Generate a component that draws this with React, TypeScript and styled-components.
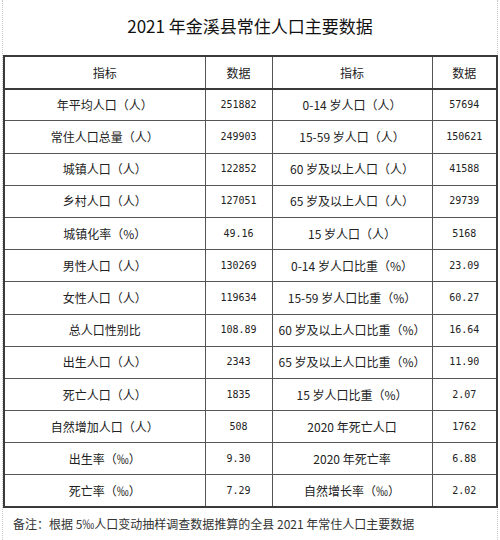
import React from 'react';
import styled, { createGlobalStyle } from 'styled-components';

const GlobalStyle = createGlobalStyle`
  html, body {
    margin: 0;
    padding: 0;
    background: #ffffff;
  }
`;

const Page = styled.div`
  box-sizing: border-box;
  width: 496px;
  height: 540px;
  margin-left: 2px;
  border-left: 1px dotted #c8c8c8;
  border-right: 1px dotted #c8c8c8;
  font-family: "Noto Sans CJK SC", "Noto Sans", sans-serif;
  color: #222;
  display: flex;
  flex-direction: column;
`;

const Title = styled.h1`
  margin: 0;
  height: 55px;
  display: flex;
  align-items: center;
  justify-content: center;
  font-size: 17px;
  font-weight: 400;
  color: #111;
  padding-bottom: 3px;
  box-sizing: border-box;
`;

const Table = styled.table`
  width: 493px;
  margin-left: 0;
  border-collapse: collapse;
  border: 2px solid #3a3a3a;
  table-layout: fixed;
`;

const Row = styled.tr<{ $head?: boolean }>`
  height: ${p => (p.$head ? '33px' : '32.2px')};
  ${p => p.$head && 'border-bottom: 2px solid #3a3a3a;'}
`;

const Cell = styled.td<{ $num?: boolean }>`
  border: 1px solid #555;
  padding: 0;
  text-align: center;
  vertical-align: middle;
  font-size: ${p => (p.$num ? '10px' : '12px')};
  font-family: ${p =>
    p.$num
      ? '"DejaVu Sans Mono", "Liberation Mono", monospace'
      : '"Noto Sans CJK SC", "Noto Sans", sans-serif'};
  color: #222;
  line-height: 1;
`;

const HeadCell = styled.th`
  border: 1px solid #555;
  padding: 0;
  text-align: center;
  vertical-align: middle;
  font-size: 12px;
  font-weight: 400;
  color: #222;
`;

const Note = styled.div`
  height: 30px;
  display: flex;
  align-items: center;
  padding-left: 10px;
  padding-bottom: 2px;
  font-size: 12px;
  color: #333;
`;

const rows: [string, string, string, string][] = [
  ['年平均人口（人）', '251882', '0-14 岁人口（人）', '57694'],
  ['常住人口总量（人）', '249903', '15-59 岁人口（人）', '150621'],
  ['城镇人口（人）', '122852', '60 岁及以上人口（人）', '41588'],
  ['乡村人口（人）', '127051', '65 岁及以上人口（人）', '29739'],
  ['城镇化率（%）', '49.16', '15 岁人口（人）', '5168'],
  ['男性人口（人）', '130269', '0-14 岁人口比重（%）', '23.09'],
  ['女性人口（人）', '119634', '15-59 岁人口比重（%）', '60.27'],
  ['总人口性别比', '108.89', '60 岁及以上人口比重（%）', '16.64'],
  ['出生人口（人）', '2343', '65 岁及以上人口比重（%）', '11.90'],
  ['死亡人口（人）', '1835', '15 岁人口比重（%）', '2.07'],
  ['自然增加人口（人）', '508', '2020 年死亡人口', '1762'],
  ['出生率（‰）', '9.30', '2020 年死亡率', '6.88'],
  ['死亡率（‰）', '7.29', '自然增长率（‰）', '2.02'],
];

const App: React.FC = () => {
  return (
    <>
      <GlobalStyle />
      <Page>
        <Title>2021 年金溪县常住人口主要数据</Title>
        <Table>
          <colgroup>
            <col style={{ width: 201 }} />
            <col style={{ width: 67 }} />
            <col style={{ width: 160 }} />
            <col style={{ width: 65 }} />
          </colgroup>
          <thead>
            <Row $head>
              <HeadCell>指标</HeadCell>
              <HeadCell>数据</HeadCell>
              <HeadCell>指标</HeadCell>
              <HeadCell>数据</HeadCell>
            </Row>
          </thead>
          <tbody>
            {rows.map((r, i) => (
              <Row key={i}>
                <Cell>{r[0]}</Cell>
                <Cell $num>{r[1]}</Cell>
                <Cell>{r[2]}</Cell>
                <Cell $num>{r[3]}</Cell>
              </Row>
            ))}
          </tbody>
        </Table>
        <Note>备注：根据 5‰人口变动抽样调查数据推算的全县 2021 年常住人口主要数据</Note>
      </Page>
    </>
  );
};

export default App;
